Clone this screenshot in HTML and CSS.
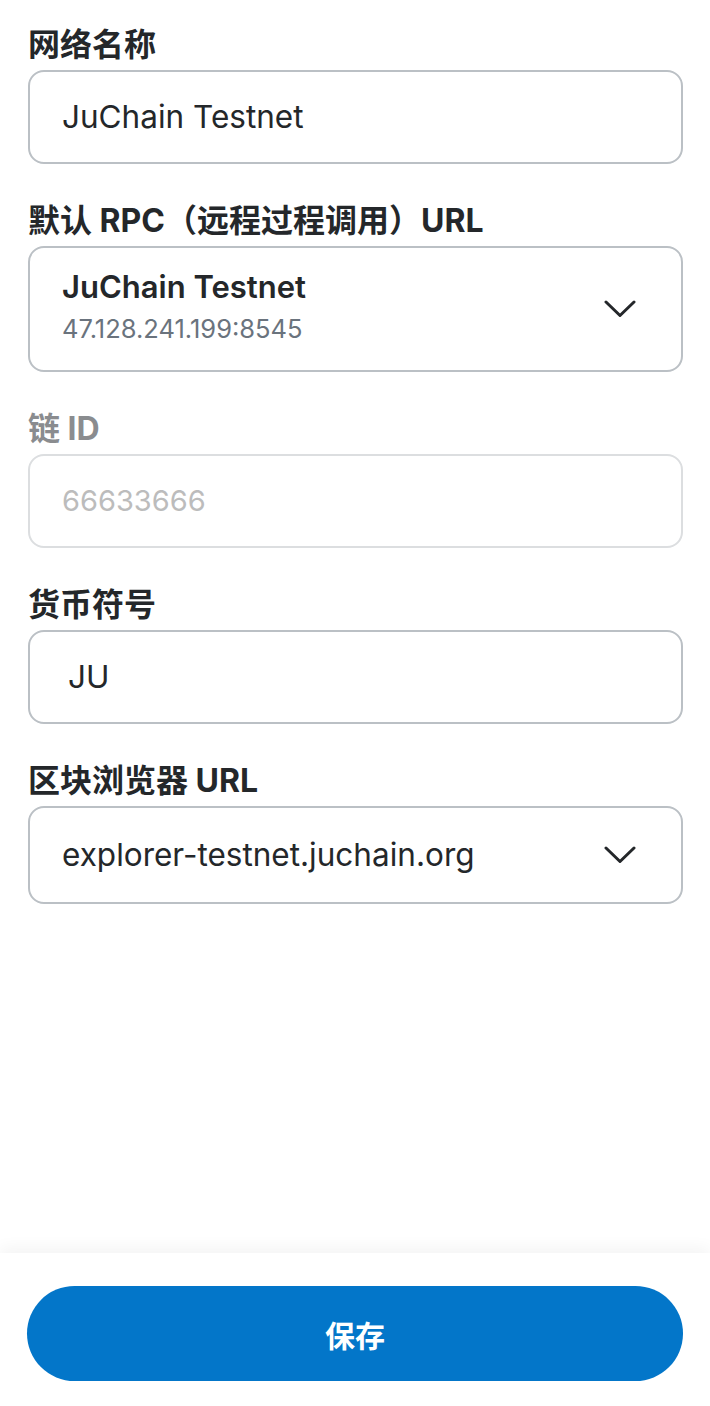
FILE: index.html
```html
<!DOCTYPE html>
<html lang="zh-CN">
<head>
<meta charset="utf-8">
<title>网络</title>
<link rel="stylesheet" href="styles.css">
</head>
<body>
<div class="page">
  <main class="form">
    <div class="field">
      <div class="label">网络名称</div>
      <div class="box">
        <span class="value">JuChain Testnet</span>
      </div>
    </div>
    <div class="field">
      <div class="label">默认 RPC（远程过程调用）URL</div>
      <div class="box box-select box-tall">
        <div class="stack">
          <span class="title">JuChain Testnet</span>
          <span class="sub">47.128.241.199:8545</span>
        </div>
        <svg class="chevron" viewBox="0 0 32 18" width="32" height="18" aria-hidden="true">
          <polyline points="2,2 16,15.5 30,2" fill="none" stroke="#24272a" stroke-width="3" stroke-linecap="round" stroke-linejoin="round"/>
        </svg>
      </div>
    </div>
    <div class="field">
      <div class="label label-disabled">链 ID</div>
      <div class="box box-disabled">
        <span class="value value-disabled">66633666</span>
      </div>
    </div>
    <div class="field">
      <div class="label">货币符号</div>
      <div class="box">
        <span class="value value-symbol">JU</span>
      </div>
    </div>
    <div class="field">
      <div class="label">区块浏览器 URL</div>
      <div class="box box-select box-explorer">
        <span class="value">explorer-testnet.juchain.org</span>
        <svg class="chevron" viewBox="0 0 32 18" width="32" height="18" aria-hidden="true">
          <polyline points="2,2 16,15.5 30,2" fill="none" stroke="#24272a" stroke-width="3" stroke-linecap="round" stroke-linejoin="round"/>
        </svg>
      </div>
    </div>
  </main>
  <footer class="footer">
    <button class="save" type="button">保存</button>
  </footer>
</div>
</body>
</html>
```
FILE: styles.css
```css
* {
  box-sizing: border-box;
}

html, body {
  margin: 0;
  padding: 0;
  background: #ffffff;
}

body {
  font-family: Inter, "Noto Sans CJK SC", sans-serif;
  color: #24272a;
}

.page {
  height: 100vh;
  display: flex;
  flex-direction: column;
}

.form {
  flex: 1;
  display: flex;
  flex-direction: column;
  gap: 33px;
  padding: 21px 27px 0 28px;
}

.field {
  display: flex;
  flex-direction: column;
}

.label {
  font-size: 32px;
  font-weight: 700;
  line-height: 48px;
  margin-bottom: 1px;
  color: #24272a;
}

.label-disabled {
  color: #8a8c8f;
}

.box {
  height: 94px;
  border: 2px solid #bbc0c5;
  border-radius: 16px;
  display: flex;
  align-items: center;
  padding: 0 32px;
  background: #ffffff;
}

.box-tall {
  height: 126px;
}

.box-explorer {
  height: 98px;
}

.box-select {
  justify-content: space-between;
  padding-right: 45px;
}

.box-disabled {
  border-color: #dcdee0;
}

.value {
  font-size: 31.5px;
  line-height: 40px;
  color: #24272a;
}

.value-disabled {
  font-size: 29px;
  color: #bcbcbc;
}

.value-symbol {
  padding-left: 6px;
}

.stack {
  display: flex;
  flex-direction: column;
}

.title {
  font-size: 31px;
  font-weight: 600;
  line-height: 40px;
  color: #24272a;
}

.sub {
  font-size: 25.5px;
  line-height: 44px;
  color: #6a737d;
}

.chevron {
  display: block;
  flex-shrink: 0;
}

.footer {
  padding: 33px 27px 25px 27px;
  background: #ffffff;
  box-shadow: 0 -6px 14px rgba(0, 0, 0, 0.045);
}

.save {
  display: block;
  width: 100%;
  height: 95px;
  border: none;
  border-radius: 48px;
  background: #0376c9;
  color: #ffffff;
  font-family: Inter, "Noto Sans CJK SC", sans-serif;
  font-size: 30px;
  font-weight: 700;
}
```
